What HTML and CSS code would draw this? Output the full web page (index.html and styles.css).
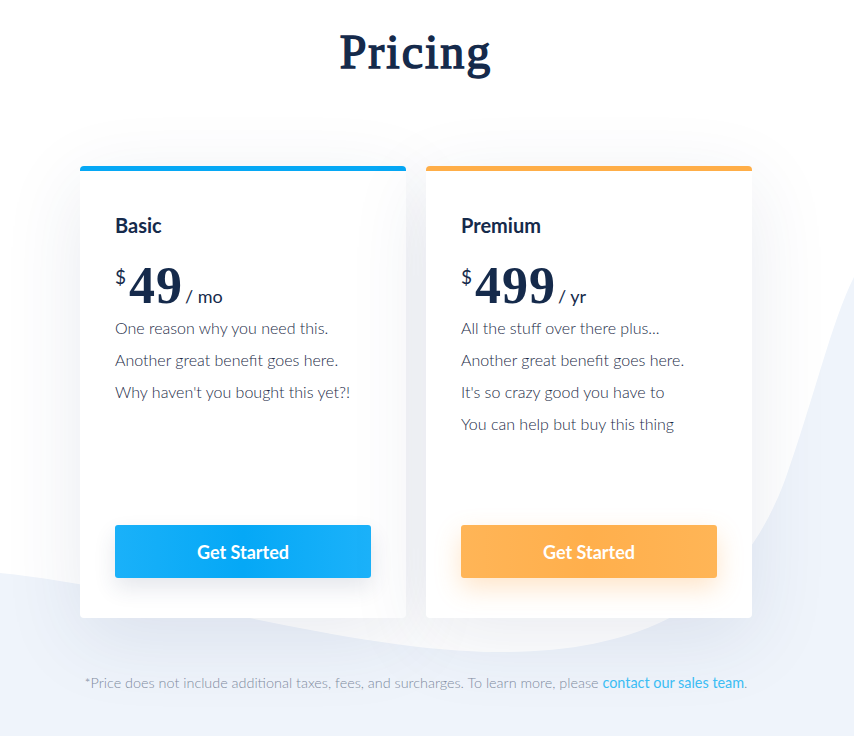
FILE: index.html
```html
<!DOCTYPE html>
<html lang="en">
<head>
<meta charset="utf-8">
<title>Pricing</title>
<link rel="stylesheet" href="styles.css">
</head>
<body>
<div class="page">
  <svg class="wave" width="854" height="736" viewBox="0 0 854 736" preserveAspectRatio="none" aria-hidden="true">
    <path d="M0,573 C150,588 350,652 500,652 C650,652 740,600 785,480 C812,405 832,320 854,277 L854,736 L0,736 Z" fill="#eff4fb"/>
  </svg>
  <main class="content">
    <h1 class="title">Pricing</h1>
    <div class="plans">
      <section class="card card-basic">
        <h2 class="plan-name">Basic</h2>
        <div class="price"><span class="currency">$</span><span class="amount">49</span><span class="period">/ mo</span></div>
        <ul class="features">
          <li>One reason why you need this.</li>
          <li>Another great benefit goes here.</li>
          <li>Why haven't you bought this yet?!</li>
        </ul>
        <a class="btn btn-blue" href="#">Get Started</a>
      </section>
      <section class="card card-premium">
        <h2 class="plan-name">Premium</h2>
        <div class="price"><span class="currency">$</span><span class="amount">499</span><span class="period">/ yr</span></div>
        <ul class="features">
          <li>All the stuff over there plus...</li>
          <li>Another great benefit goes here.</li>
          <li>It's so crazy good you have to</li>
          <li>You can help but buy this thing</li>
        </ul>
        <a class="btn btn-orange" href="#">Get Started</a>
      </section>
    </div>
    <p class="note">*Price does not include additional taxes, fees, and surcharges. To learn more, please <a href="#">contact our sales team</a>.</p>
  </main>
</div>
</body>
</html>
```

FILE: styles.css
```css
html, body {
  margin: 0;
  padding: 0;
  background: #ffffff;
}

body {
  font-family: Lato, "Open Sans", sans-serif;
  color: #152a4b;
}

.page {
  position: relative;
  width: 854px;
  height: 736px;
  overflow: hidden;
}

.wave {
  position: absolute;
  left: 0;
  top: 0;
  z-index: 0;
}

.content {
  position: relative;
  z-index: 1;
  width: 672px;
  margin-left: 80px;
  padding-top: 25px;
}

.title {
  margin: 0;
  font-family: "Liberation Serif", "Times New Roman", serif;
  font-weight: 400;
  -webkit-text-stroke: 1.5px #152a4b;
  font-size: 48px;
  line-height: 53px;
  letter-spacing: 2px;
  text-align: center;
  color: #152a4b;
}

.plans {
  display: flex;
  gap: 20px;
  margin-top: 88px;
}

.card {
  flex: 0 0 326px;
  height: 452px;
  box-sizing: border-box;
  background: #ffffff;
  border-radius: 4px;
  border-top: 5px solid #06a8f5;
  padding: 42px 35px 40px;
  display: flex;
  flex-direction: column;
  box-shadow: 0 20px 80px rgba(40, 60, 110, 0.10);
}

.card-premium {
  border-top-color: #ffae48;
}

.plan-name {
  margin: 0;
  font-size: 20px;
  line-height: 24px;
  font-weight: 700;
  color: #152a4b;
}

.price {
  margin-top: 14px;
  height: 52px;
  line-height: 52px;
  white-space: nowrap;
  color: #152a4b;
}

.currency {
  font-size: 19px;
  vertical-align: 19px;
  margin-right: 3px;
}

.amount {
  font-family: "Liberation Serif", "Times New Roman", serif;
  font-weight: 700;
  font-size: 52px;
  letter-spacing: 1px;
}

.period {
  font-size: 18px;
  margin-left: 2px;
}

.features {
  list-style: none;
  margin: 9px 0 0;
  padding: 0;
}

.features li {
  font-size: 16px;
  line-height: 32px;
  font-weight: 300;
  color: #1b2b47;
}

.btn {
  margin-top: auto;
  display: flex;
  align-items: center;
  justify-content: center;
  height: 53px;
  border-radius: 3px;
  color: #ffffff;
  font-size: 18px;
  font-weight: 700;
  text-decoration: none;
}

.btn-blue {
  background: linear-gradient(90deg, #1ab1f9 0%, #05a8f6 50%, #1cb2fa 100%);
  box-shadow: 0 10px 22px rgba(40, 60, 100, 0.12);
}

.btn-orange {
  background: linear-gradient(90deg, #ffb557 0%, #ffaf4c 50%, #ffb556 100%);
  box-shadow: 0 10px 26px rgba(255, 160, 60, 0.28);
}

.note {
  margin: 56px 0 0;
  font-size: 14.4px;
  line-height: 18px;
  font-weight: 300;
  text-align: center;
  color: #808ba0;
  white-space: nowrap;
}

.note a {
  color: #3bbdf4;
  font-weight: 400;
  text-decoration: none;
}
```
